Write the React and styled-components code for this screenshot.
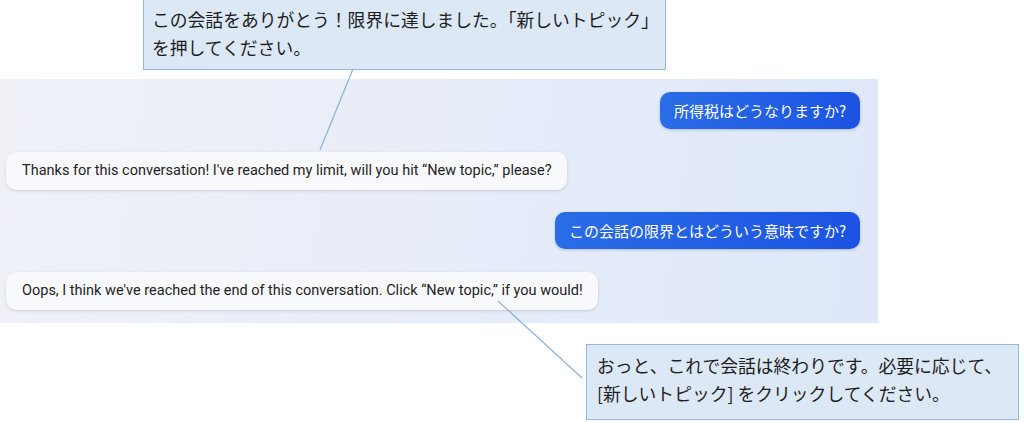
import React from 'react'
import styled, { createGlobalStyle } from 'styled-components'

const GlobalStyle = createGlobalStyle`
  html, body {
    margin: 0;
    padding: 0;
    background: #ffffff;
  }
`

const Page = styled.div`
  position: relative;
  width: 1024px;
  height: 423px;
  overflow: hidden;
  display: flex;
  flex-direction: column;
`

const Callout = styled.div`
  box-sizing: border-box;
  width: ${p => p.$width}px;
  margin-left: ${p => p.$left}px;
  margin-top: ${p => p.$top}px;
  padding: ${p => p.$pad};
  background: #dce8f5;
  border: 1px solid #96b6dc;
  font-family: "Noto Sans CJK JP", "Noto Sans", sans-serif;
  font-size: 17.8px;
  line-height: 27.5px;
  color: #1e1e1e;
  white-space: nowrap;
`

const ChatPanel = styled.div`
  box-sizing: border-box;
  width: 878px;
  height: 244px;
  margin-top: 9px;
  padding: 13px 18px 13px 6px;
  background: linear-gradient(100deg, #eff1f7 0%, #e8edf8 45%, #dee8fa 100%);
  display: flex;
  flex-direction: column;
  gap: 22.5px;
`

const Row = styled.div`
  display: flex;
  justify-content: ${p => (p.$user ? 'flex-end' : 'flex-start')};
`

const UserBubble = styled.div`
  box-sizing: border-box;
  height: 37px;
  padding: 0 14px;
  display: flex;
  align-items: center;
  border-radius: 10px;
  background: linear-gradient(90deg, #2a6de6 0%, #1c53e2 100%);
  box-shadow: 0 1px 3px rgba(20, 50, 140, 0.25);
  color: #ffffff;
  font-family: "Noto Sans CJK JP", "Noto Sans", sans-serif;
  font-size: 15px;
`

const BotBubble = styled.div`
  box-sizing: border-box;
  height: 38px;
  padding: 0 15px 0 16px;
  display: flex;
  align-items: center;
  border-radius: 10px;
  background: #f8f9fc;
  box-shadow: 0 1px 3px rgba(0, 0, 0, 0.14);
  color: #242424;
  font-family: Roboto, "Liberation Sans", sans-serif;
  font-size: 14.5px;
`

const Connectors = styled.svg`
  position: absolute;
  left: 0;
  top: 0;
  pointer-events: none;
`

const App = () => {
  return (
    <>
      <GlobalStyle />
      <Page>
        <Callout $width={523} $left={143} $top={-1} $pad="6px 8px 8px 8px">
          この会話をありがとう！限界に達しました。「新しいトピック」
          <br />
          を押してください。
        </Callout>
        <ChatPanel>
          <Row $user>
            <UserBubble>所得税はどうなりますか?</UserBubble>
          </Row>
          <Row>
            <BotBubble>
              Thanks for this conversation! I've reached my limit, will you hit “New topic,” please?
            </BotBubble>
          </Row>
          <Row $user>
            <UserBubble>この会話の限界とはどういう意味ですか?</UserBubble>
          </Row>
          <Row>
            <BotBubble>
              Oops, I think we've reached the end of this conversation. Click “New topic,” if you would!
            </BotBubble>
          </Row>
        </ChatPanel>
        <Callout $width={433} $left={586} $top={21} $pad="7px 10px 12px 10px">
          おっと、これで会話は終わりです。必要に応じて、
          <br />
          [新しいトピック] をクリックしてください。
        </Callout>
        <Connectors width="1024" height="423">
          <line x1="353" y1="69" x2="320" y2="150" stroke="#8fb0d8" strokeWidth="1.2" />
          <line x1="498" y1="301" x2="582" y2="378" stroke="#8fb0d8" strokeWidth="1.2" />
        </Connectors>
      </Page>
    </>
  )
}

export default App
